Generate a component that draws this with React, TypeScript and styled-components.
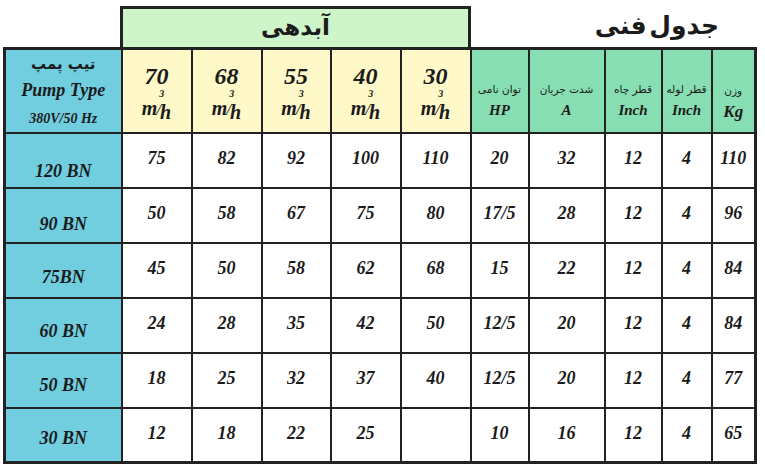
import styled, { createGlobalStyle } from 'styled-components';

const GlobalStyles = createGlobalStyle`
  html, body {
    margin: 0;
    padding: 0;
    background: #ffffff;
  }
  body {
    font-family: "Liberation Serif", "Times New Roman", serif;
    color: #1b1b1b;
  }
`;

const FA = `"DejaVu Sans", "Noto Sans", sans-serif`;
const LATIN = `"Liberation Serif", "Times New Roman", serif`;

const colors = {
  blue: '#70cedf',
  yellow: '#fff8c8',
  green: '#87deb3',
  band: '#cef5c9',
  line: '#222222',
};

const Page = styled.main`
  width: 765px;
  height: 466px;
  padding: 6px 0 0 3px;
  box-sizing: border-box;
`;

const TopRow = styled.div`
  display: flex;
  align-items: stretch;
  height: 41px;
`;

const Spacer = styled.div`
  width: 117px;
`;

const Band = styled.div`
  width: 351px;
  box-sizing: border-box;
  background: ${colors.band};
  border: 3px solid ${colors.line};
  border-bottom: none;
  display: flex;
  align-items: center;
  justify-content: center;
  font-family: ${FA};
  font-weight: 700;
  font-size: 23px;
  direction: rtl;
  padding-bottom: 2px;
`;

const Title = styled.div`
  flex: 1;
  display: flex;
  justify-content: flex-end;
  align-items: center;
  padding: 0 46px 2px 0;
  font-family: ${FA};
  font-weight: 700;
  font-size: 25px;
`;

const TitleText = styled.span`
  direction: rtl;
  word-spacing: -6px;
`;

const Table = styled.table`
  border-collapse: collapse;
  table-layout: fixed;
  width: 751px;
  border: 3px solid ${colors.line};
`;

const Col = styled.col<{ $w: number }>`
  width: ${(p) => p.$w}px;
`;

const HeadRow = styled.tr`
  height: 84px;
`;

const BodyRow = styled.tr`
  height: 55px;
`;

const Cell = styled.td`
  border: 2px solid ${colors.line};
  padding: 0;
  text-align: center;
  vertical-align: middle;
  font-family: ${LATIN};
  font-weight: 700;
  font-style: italic;
  font-size: 18px;
  background: #ffffff;
  line-height: 1;
`;

const TypeHead = styled(Cell)`
  background: ${colors.blue};
`;

const TypeCell = styled(Cell)<{ $drop: number }>`
  background: ${colors.blue};
  padding-top: ${(p) => p.$drop}px;
`;

const ValueCell = styled(Cell)`
  padding-bottom: 4px;
`;

const FlowHead = styled(Cell)`
  background: ${colors.yellow};
`;

const SpecHead = styled(Cell)<{ $drop: number }>`
  background: ${colors.green};
  padding-top: ${(p) => p.$drop}px;
`;

const FaLabel = styled.div<{ $size?: number }>`
  font-family: ${FA};
  font-style: normal;
  font-weight: 400;
  font-size: ${(p) => p.$size ?? 10.5}px;
  direction: rtl;
  line-height: 1.2;
`;

const FaStrong = styled(FaLabel)`
  font-weight: 700;
`;

const EnLabel = styled.div<{ $size: number; $gap?: number }>`
  font-size: ${(p) => p.$size}px;
  margin-top: ${(p) => p.$gap ?? 0}px;
  line-height: 1.1;
`;

const FlowNum = styled.div`
  font-size: 24px;
  line-height: 1;
`;

const Unit = styled.div`
  display: inline-flex;
  align-items: flex-end;
  font-size: 20px;
  line-height: 1;
  margin-top: 10px;
`;

const UnitM = styled.span`
  position: relative;
`;

const Cube = styled.span`
  position: absolute;
  right: -7px;
  top: -9px;
  font-size: 10px;
`;

const Slash = styled.span`
  font-size: 17px;
  font-weight: 400;
  margin: 0 -1px;
`;

const UnitH = styled.span`
  position: relative;
  top: 4px;
`;

const flows = [70, 68, 55, 40, 30];

const specs = [
  { fa: 'توان نامی', en: 'HP' },
  { fa: 'شدت جریان', en: 'A' },
  { fa: 'قطر چاه', en: 'Inch' },
  { fa: 'قطر لوله', en: 'Inch' },
  { fa: 'وزن', en: 'Kg' },
];

const rows = [
  { type: '120 BN', drop: 22, vals: ['75', '82', '92', '100', '110'], spec: ['20', '32', '12', '4', '110'] },
  { type: '90 BN', drop: 18, vals: ['50', '58', '67', '75', '80'], spec: ['17/5', '28', '12', '4', '96'] },
  { type: '75BN', drop: 14, vals: ['45', '50', '58', '62', '68'], spec: ['15', '22', '12', '4', '84'] },
  { type: '60 BN', drop: 12, vals: ['24', '28', '35', '42', '50'], spec: ['12/5', '20', '12', '4', '84'] },
  { type: '50 BN', drop: 10, vals: ['18', '25', '32', '37', '40'], spec: ['12/5', '20', '12', '4', '77'] },
  { type: '30 BN', drop: 6, vals: ['12', '18', '22', '25', ''], spec: ['10', '16', '12', '4', '65'] },
];

const widths = [117, 70, 70, 69, 70, 70, 58, 76, 57, 50, 44];

function FlowUnit() {
  return (
    <Unit>
      <UnitM>
        m<Cube>3</Cube>
      </UnitM>
      <Slash>/</Slash>
      <UnitH>h</UnitH>
    </Unit>
  );
}

export default function App() {
  return (
    <>
      <GlobalStyles />
      <Page>
        <TopRow>
          <Spacer />
          <Band>آبدهی</Band>
          <Title>
            <TitleText>جدول فنی</TitleText>
          </Title>
        </TopRow>
        <Table>
          <colgroup>
            {widths.map((w, i) => (
              <Col key={i} $w={w} />
            ))}
          </colgroup>
          <tbody>
            <HeadRow>
              <TypeHead>
                <FaStrong $size={15}>تیپ پمپ</FaStrong>
                <EnLabel $size={18} $gap={8}>Pump Type</EnLabel>
                <EnLabel $size={14} $gap={10}>380V/50 Hz</EnLabel>
              </TypeHead>
              {flows.map((f) => (
                <FlowHead key={f}>
                  <FlowNum>{f}</FlowNum>
                  <FlowUnit />
                </FlowHead>
              ))}
              {specs.map((s, i) => (
                <SpecHead key={i} $drop={i === 4 ? 24 : 20}>
                  <FaLabel>{s.fa}</FaLabel>
                  <EnLabel $size={i === 4 ? 17 : 15} $gap={6}>
                    {s.en}
                  </EnLabel>
                </SpecHead>
              ))}
            </HeadRow>
            {rows.map((r) => (
              <BodyRow key={r.type}>
                <TypeCell $drop={r.drop}>{r.type}</TypeCell>
                {r.vals.map((v, i) => (
                  <ValueCell key={`v${i}`}>{v}</ValueCell>
                ))}
                {r.spec.map((v, i) => (
                  <ValueCell key={`s${i}`}>{v}</ValueCell>
                ))}
              </BodyRow>
            ))}
          </tbody>
        </Table>
      </Page>
    </>
  );
}
